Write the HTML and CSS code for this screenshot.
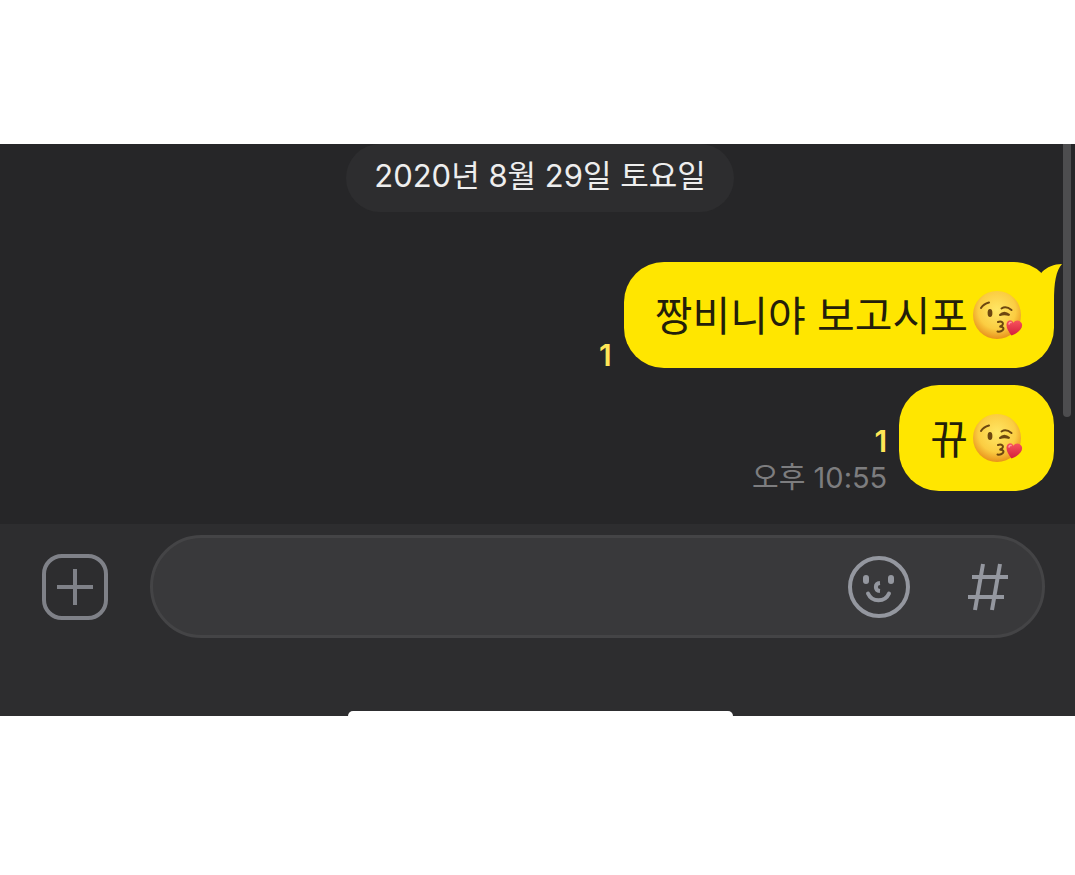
FILE: index.html
```html
<!DOCTYPE html>
<html lang="ko">
<head>
    <title>채팅</title>
    <meta charset="UTF-8" />
    <meta name="viewport" content="width=device-width, initial-scale=1.0" />
    <link rel="stylesheet" href="styles.css">
</head>
<body>
    <!-- Kiss emoji, reused in the messages -->
    <svg class="defs" aria-hidden="true">
        <defs>
            <radialGradient id="face" cx="0.5" cy="0.4" r="0.6">
                <stop offset="0" stop-color="#ffe766" />
                <stop offset="0.65" stop-color="#fbcd42" />
                <stop offset="1" stop-color="#e8921c" />
            </radialGradient>
            <linearGradient id="heart" x1="0" y1="0" x2="0" y2="1">
                <stop offset="0" stop-color="#f8535c" />
                <stop offset="1" stop-color="#d31f3d" />
            </linearGradient>
        </defs>
        <symbol id="kiss" viewBox="0 0 50 50">
            <circle cx="24" cy="25" r="24" fill="url(#face)" />
            <g fill="none" stroke="#6d4710" stroke-width="2" stroke-linecap="round">
                <path d="M8 18Q10.500 14 16 12.500" />
                <path d="M28.500 18.500Q33 15.500 38.500 20" />
                <path d="M27 25Q31 20.500 36.500 25Q31 23.500 27 25" />
                <path d="M25 32C28.500 30.500 31.500 33 29 35.500L26.500 36.800C30.500 36 32 39.500 28.500 41Q26.500 42 24.500 41.500" />
            </g>
            <ellipse cx="17" cy="23" rx="2.400" ry="4" fill="#6d4710" />
            <path d="M38.500 45.500C35.500 41.500 32.500 37 33.800 33C35 29.500 39 29.500 40.500 32.800C42.500 29.500 47 30 48.800 33.500C50.500 38 45.500 43 38.500 45.500Z" fill="url(#heart)" />
            <path d="M36 34Q36.500 32 38 32.500" fill="none" stroke="#ff9a9f" stroke-width="1.500" stroke-linecap="round" />
        </symbol>
    </svg>

    <main class="screen">
        <section class="chat">
            <div class="scrollbar"></div>
            <time class="date" datetime="2020-08-29">2020년 8월 29일 토요일</time>

            <div class="message">
                <div class="meta">
                    <span class="unread">1</span>
                </div>
                <div class="bubble">
                    <p>짱비니야 보고시포</p>
                    <svg class="emoji" role="img" aria-label="😘"><use href="#kiss" /></svg>
                    <svg class="tail" viewBox="0 0 28 40" aria-hidden="true">
                        <path d="M2 20L8 10C13 5 20 2 28 2C22 9 20 20 20 40L2 40Z" />
                    </svg>
                </div>
            </div>

            <div class="message">
                <div class="meta">
                    <span class="unread">1</span>
                    <time class="time" datetime="22:55">오후 10:55</time>
                </div>
                <div class="bubble">
                    <p>뀨</p>
                    <svg class="emoji" role="img" aria-label="😘"><use href="#kiss" /></svg>
                </div>
            </div>
        </section>

        <footer class="bottom">
            <form class="composer">
                <button class="add" type="button" aria-label="추가">
                    <svg viewBox="0 0 66 66" width="66" height="66">
                        <rect x="2" y="2" width="62" height="62" rx="18" />
                        <path d="M33 15V51M15 33H51" />
                    </svg>
                </button>
                <div class="field">
                    <input class="text" type="text" aria-label="메시지">
                    <button type="button" aria-label="이모티콘">
                        <svg viewBox="0 0 62 62" width="62" height="62">
                            <circle cx="31" cy="31" r="29" />
                            <rect class="eye" x="15" y="19" width="6" height="9" rx="3" />
                            <rect class="eye" x="40" y="19" width="6" height="9" rx="3" />
                            <path d="M32 27C26.500 27.500 26.500 34.500 32 35" />
                            <path d="M20 37.500C24 46.500 37 46.500 41 37.500" stroke-linecap="round" />
                        </svg>
                    </button>
                    <button type="button" aria-label="샵검색">
                        <svg viewBox="0 0 40 48" width="40" height="48">
                            <path d="M15 1L7 47M32 1L24 47M4 14H40M0 34H36" />
                        </svg>
                    </button>
                </div>
            </form>
            <div class="home-bar"></div>
        </footer>
    </main>
</body>
</html>
```
FILE: styles.css
```css
* {
    margin: 0;
    padding: 0;
    box-sizing: border-box;
}

body {
    font-family: Inter, "Noto Sans CJK KR", sans-serif;
    background: #fff;
    padding: 144px 0;
}

.defs {
    position: absolute;
    width: 0;
    height: 0;
}

.screen {
    background: #262628;
}

/* Messages */
.chat {
    position: relative;
    display: flex;
    flex-direction: column;
    gap: 17px;
    padding: 0 21px 33px 26px;
}

.scrollbar {
    position: absolute;
    top: 0;
    right: 4px;
    width: 8px;
    height: 273px;
    background: #4d4d4f;
    border-radius: 0 0 4px 4px;
}

.date {
    align-self: center;
    height: 68px;
    margin-bottom: 33px;
    padding: 0 28px;
    line-height: 64px;
    font-size: 31px;
    color: #eee;
    background: #2d2d2f;
    border-radius: 34px;
}

.message {
    display: flex;
    justify-content: flex-end;
    align-items: flex-end;
    gap: 12px;
}

.meta {
    display: flex;
    flex-direction: column;
    align-items: flex-end;
    gap: 11px;
    font-size: 30px;
    line-height: 26px;
    white-space: nowrap;
}

.unread {
    font-weight: 600;
    color: #ffe657;
}

.time {
    font-size: 29px;
    color: #7d7d7f;
}

.bubble {
    position: relative;
    display: flex;
    align-items: center;
    gap: 5px;
    height: 106px;
    padding: 0 31px;
    font-family: "Noto Sans CJK KR", sans-serif;
    font-size: 41px;
    white-space: nowrap;
    color: #241f0a;
    background: #ffe600;
    border-radius: 40px;
}

.bubble p {
    padding-bottom: 5px;
}

.emoji {
    width: 50px;
    height: 50px;
}

.tail {
    position: absolute;
    top: 0;
    right: -8px;
    width: 28px;
    height: 40px;
    fill: #ffe600;
}

/* Input bar */
.bottom {
    background: #2d2d2f;
    padding: 11px 0 0 6px;
}

.composer {
    display: flex;
    align-items: center;
    gap: 42px;
    padding: 0 30px 0 36px;
}

button {
    display: flex;
    background: none;
    border: none;
    cursor: pointer;
}

button svg {
    fill: none;
    stroke: #94979f;
    stroke-width: 4;
}

.add svg {
    stroke: #7f8188;
}

button .eye {
    fill: #94979f;
    stroke: none;
}

.field {
    flex: 1;
    display: flex;
    align-items: center;
    gap: 58px;
    height: 103px;
    padding: 0 34px;
    background: #39393b;
    border: 3px solid #444446;
    border-radius: 52px;
}

.text {
    flex: 1;
    min-width: 0;
    height: 60px;
    font: inherit;
    font-size: 36px;
    color: #eee;
    background: none;
    border: none;
    outline: none;
}

.home-bar {
    width: 36%;
    height: 5px;
    margin: 73px auto 0;
    background: #fff;
    border-radius: 8px 8px 0 0;
}
```
